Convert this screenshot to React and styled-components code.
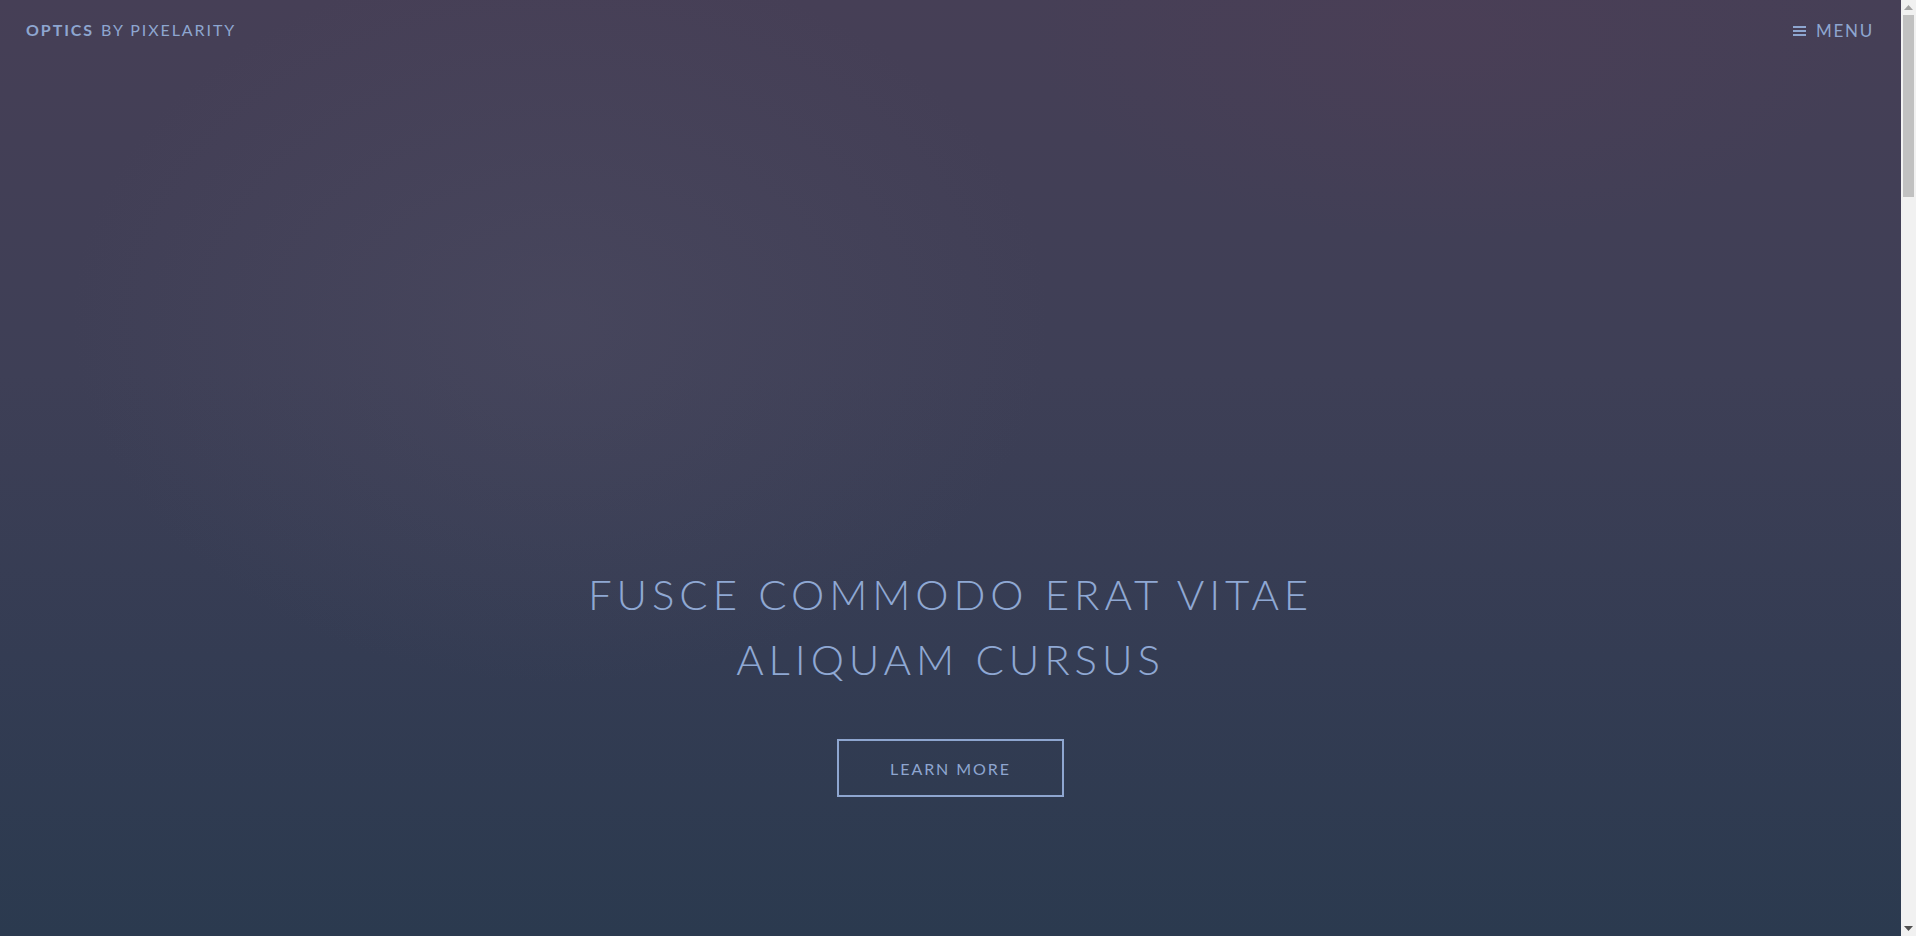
import React from 'react';
import styled, { createGlobalStyle } from 'styled-components';

const GlobalStyle = createGlobalStyle`
    html, body {
        margin: 0;
        padding: 0;
        height: 100%;
        overflow: hidden;
        background: #2b3a4f;
    }
    body {
        font-family: Lato, "Open Sans", "Liberation Sans", sans-serif;
        color: #8ea6d0;
    }
    * { box-sizing: border-box; }
`

const Layout = styled.div`
    display: flex;
    height: 100vh;
`

const Main = styled.main`
    position: relative;
    flex: 1;
    overflow: hidden;
`

// the browser's scroll rail, drawn as in the screenshot
const Rail = styled.div`
    width: 15px;
    flex: none;
    display: flex;
    flex-direction: column;
    background: #f1f1f1;
`

const RailButton = styled.div`
    height: 15px;
    display: flex;
    align-items: center;
    justify-content: center;
`

const Track = styled.div`
    flex: 1;
    padding: 0 2px;
`

const Thumb = styled.div`
    height: 182px;
    background: #c1c1c1;
`

const Header = styled.header`
    position: absolute;
    top: 0;
    left: 0;
    right: 0;
    height: 60px;
    display: flex;
    justify-content: space-between;
    align-items: center;
    padding: 0 26px 2px 26px;
    z-index: 10;
`

const Logo = styled.a`
    font-size: 16px;
    letter-spacing: 0.12em;
    text-transform: uppercase;
    color: #8ea6d0;
    text-decoration: none;
    font-weight: 400;
    strong {
        font-weight: 700;
        margin-right: 1px;
    }
`

const MenuToggle = styled.a`
    display: flex;
    align-items: center;
    gap: 10px;
    font-size: 17px;
    letter-spacing: 0.1em;
    text-transform: uppercase;
    color: #8ea6d0;
    text-decoration: none;
    margin-top: 3px;
    margin-right: 1px;
`

const Hero = styled.section`
    height: 100vh;
    display: flex;
    flex-direction: column;
    align-items: center;
    justify-content: flex-end;
    padding-bottom: 139px;
    background:
        radial-gradient(ellipse 700px 520px at 560px 320px, rgba(84, 82, 104, 0.35), transparent 70%),
        radial-gradient(ellipse 600px 300px at 1450px 30px, rgba(80, 62, 86, 0.4), transparent 70%),
        linear-gradient(180deg, #463f56 0%, #3e3f56 40%, #343c53 70%, #2b3a4f 100%);
`

const Title = styled.h2`
    margin: 0 0 47px 0;
    font-size: 42px;
    font-weight: 300;
    line-height: 65px;
    letter-spacing: 0.117em;
    text-transform: uppercase;
    text-align: center;
    color: #8fa8d3;
    max-width: 760px;
`

const Button = styled.a`
    display: flex;
    align-items: center;
    justify-content: center;
    width: 227px;
    height: 58px;
    border: 2px solid #8ea6d0;
    color: #8ea6d0;
    font-size: 16px;
    letter-spacing: 0.12em;
    text-transform: uppercase;
    text-decoration: none;
`

const MenuIcon = () => (
    <svg width="13" height="12" viewBox="0 0 13 12">
        <rect x="0" y="1" width="13" height="2" fill="#8ea6d0" />
        <rect x="0" y="5" width="13" height="2" fill="#8ea6d0" />
        <rect x="0" y="9" width="13" height="2" fill="#8ea6d0" />
    </svg>
)

const Arrow = ({ down, color }) => (
    <svg width="9" height="5" viewBox="0 0 9 5">
        {down
            ? <polygon points="0,0 9,0 4.5,5" fill={color} />
            : <polygon points="0,5 9,5 4.5,0" fill={color} />}
    </svg>
)

const App = () => {
    return (
        <Layout>
            <GlobalStyle />
            <Main>
                <Header>
                    <Logo href="#"><strong>Optics</strong> by Pixelarity</Logo>
                    <MenuToggle href="#"><MenuIcon />Menu</MenuToggle>
                </Header>
                <Hero>
                    <Title>Fusce commodo erat vitae aliquam cursus</Title>
                    <Button href="#">Learn More</Button>
                </Hero>
            </Main>
            <Rail>
                <RailButton><Arrow color="#a3a3a3" /></RailButton>
                <Track><Thumb /></Track>
                <RailButton><Arrow down color="#505050" /></RailButton>
            </Rail>
        </Layout>
    )
}

export default App
